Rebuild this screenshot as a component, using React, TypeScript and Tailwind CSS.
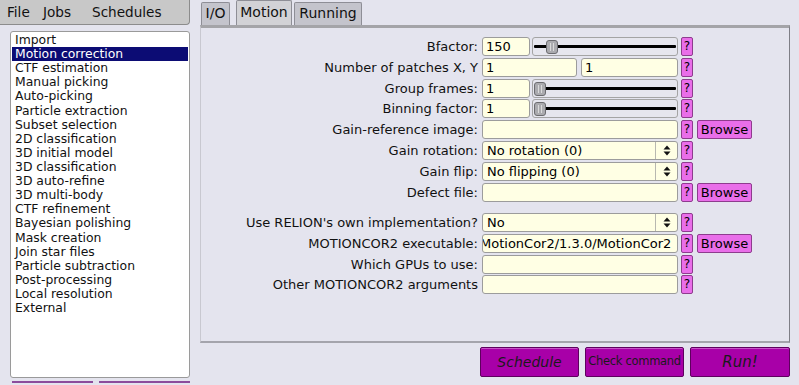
import React from "react";

const jobs = [
  "Import",
  "Motion correction",
  "CTF estimation",
  "Manual picking",
  "Auto-picking",
  "Particle extraction",
  "Subset selection",
  "2D classification",
  "3D initial model",
  "3D classification",
  "3D auto-refine",
  "3D multi-body",
  "CTF refinement",
  "Bayesian polishing",
  "Mask creation",
  "Join star files",
  "Particle subtraction",
  "Post-processing",
  "Local resolution",
  "External",
];

function Help() {
  return (
    <div className="ml-[3px] w-[12px] h-[19px] bg-[#e96ee9] border border-[#8e3c8e] rounded-[2px] text-[12px] leading-[17px] text-center text-black">
      ?
    </div>
  );
}

function Browse() {
  return (
    <div className="ml-[4px] w-[55px] h-[19px] bg-[#e96ee9] border border-[#8e3c8e] rounded-[2px] text-[13px] leading-[17px] text-center text-black">
      Browse
    </div>
  );
}

function Input({ w, value, className }: { w: string; value?: string; className?: string }) {
  return (
    <div
      className={`${w} h-[19px] bg-[#ffffe4] border border-[#9c9c9c] rounded-[3px] text-[13px] leading-[17px] px-[3px] overflow-hidden whitespace-nowrap text-black ${className ?? ""}`}
    >
      {value}
    </div>
  );
}

function Slider({ thumb }: { thumb: number }) {
  return (
    <div className="relative ml-[2px] w-[146px] h-[19px] border border-[#a4a4a4] rounded-[3px] bg-[#e6e6ee] flex items-center px-[1px]">
      <div className="w-full h-[3px] bg-black rounded-[1px]" />
      <div
        className="absolute top-[2px] w-[12px] h-[14px] bg-[#ababaf] border border-[#6c6c70] rounded-[3px] flex justify-center"
        style={{ left: thumb }}
      >
        <div className="mt-[2px] w-[4px] h-[8px] border-l border-r border-[#dadada]" />
      </div>
    </div>
  );
}

function Select({ value }: { value: string }) {
  return (
    <div className="w-[196px] h-[19px] bg-[#ffffe4] border border-[#9c9c9c] rounded-[3px] flex text-[13px] leading-[17px] text-black">
      <div className="flex-1 px-[4px] border-r border-[#b8b8b0]">{value}</div>
      <div className="w-[21px] flex items-center justify-center">
        <svg width="8" height="11" viewBox="0 0 8 11">
          <polygon points="4,0.5 7.5,4.5 0.5,4.5" fill="#111" />
          <polygon points="0.5,6.5 7.5,6.5 4,10.5" fill="#111" />
        </svg>
      </div>
    </div>
  );
}

function Row({ label, children, className }: { label: string; children: React.ReactNode; className?: string }) {
  return (
    <div className={`h-[20.8px] flex items-start ${className ?? ""}`}>
      <div className="w-[278px] text-right text-[13px] leading-[19px] text-[#111] pr-[1px] whitespace-nowrap">{label}</div>
      <div className="ml-[3px] flex items-start">{children}</div>
    </div>
  );
}

export default function App() {
  return (
    <div className="w-[799px] h-[385px] bg-[#e4e4ee] flex overflow-hidden font-['DejaVu_Sans',sans-serif] text-black">
      {/* Left column */}
      <div className="w-[200px] flex flex-col shrink-0">
        <div className="shrink-0 w-[190px] h-[25px] bg-[#c8c8c8] border-b border-r border-[#8c8c8c] rounded-br-[4px] flex items-center pl-[7px] text-[13.6px] text-[#111]">
          <span className="w-[36px]">File</span>
          <span className="w-[49px]">Jobs</span>
          <span>Schedules</span>
        </div>
        <div className="shrink-0 mt-[6px] ml-[10px] w-[180px] h-[347px] bg-white border border-[#9a9a9a] rounded-[3px] pt-[1px] px-[1px]">
          {jobs.map((j) => (
            <div
              key={j}
              className={`h-[14.12px] leading-[14.12px] text-[12.4px] pl-[3px] whitespace-nowrap ${
                j === "Motion correction" ? "bg-[#0c0c74] text-white" : "text-[#111]"
              }`}
            >
              {j}
            </div>
          ))}
        </div>
        <div className="shrink-0 mt-[3px] ml-[12px] flex gap-[6px]">
          <div className="w-[81px] h-[10px] bg-[#e4e4ee] border-t-2 border-[#8c4c9c]" />
          <div className="w-[91px] h-[10px] bg-[#e4e4ee] border-t-2 border-[#8c4c9c]" />
        </div>
      </div>

      {/* Right column */}
      <div className="flex flex-col w-[599px]">
        <div className="shrink-0 h-[25px] flex items-end pl-[1px] text-[14px] text-[#111]">
          <div className="w-[29px] h-[23px] bg-[#c4c4cc] border-t border-l border-r border-[#8e8e96] rounded-t-[2px] text-center leading-[21px]">
            I/O
          </div>
          <div className="ml-[6px] w-[56px] h-[25px] bg-[#d2d2d6] border-t border-l border-r border-[#8e8e96] rounded-t-[2px] text-center leading-[22px]">
            Motion
          </div>
          <div className="ml-[2px] w-[68px] h-[23px] bg-[#c4c4cc] border-t border-l border-r border-[#8e8e96] rounded-t-[2px] text-center leading-[21px]">
            Running
          </div>
        </div>
        <div className="shrink-0 w-[590px] h-[318px] border-t-[3px] border-t-[#a4a4a8] border-r border-r-[#7e7e86] border-b-2 border-b-[#a4a4ac] border-l border-l-[#c8c8d0] pt-[9px]">
          <Row label="Bfactor:">
            <Input w="w-[48px]" value="150" />
            <Slider thumb={13} />
            <Help />
          </Row>
          <Row label="Number of patches X, Y">
            <Input w="w-[95px]" value="1" />
            <Input w="w-[97px]" value="1" className="ml-[4px]" />
            <Help />
          </Row>
          <Row label="Group frames:">
            <Input w="w-[48px]" value="1" />
            <Slider thumb={1} />
            <Help />
          </Row>
          <Row label="Binning factor:">
            <Input w="w-[48px]" value="1" />
            <Slider thumb={1} />
            <Help />
          </Row>
          <Row label="Gain-reference image:">
            <Input w="w-[196px]" />
            <Help />
            <Browse />
          </Row>
          <Row label="Gain rotation:">
            <Select value="No rotation (0)" />
            <Help />
          </Row>
          <Row label="Gain flip:">
            <Select value="No flipping (0)" />
            <Help />
          </Row>
          <Row label="Defect file:">
            <Input w="w-[196px]" />
            <Help />
            <Browse />
          </Row>
          <Row label="Use RELION's own implementation?" className="mt-[9.6px]">
            <Select value="No" />
            <Help />
          </Row>
          <Row label="MOTIONCOR2 executable:">
            <div className="w-[196px] h-[19px] bg-[#ffffe4] border border-[#9c9c9c] rounded-[3px] text-[13px] leading-[17px] overflow-hidden whitespace-nowrap pl-0 indent-[-3px]">
              MotionCor2/1.3.0/MotionCor2
            </div>
            <Help />
            <Browse />
          </Row>
          <Row label="Which GPUs to use:">
            <Input w="w-[196px]" />
            <Help />
          </Row>
          <Row label="Other MOTIONCOR2 arguments">
            <Input w="w-[196px]" />
            <Help />
          </Row>
        </div>
        <div className="shrink-0 mt-[4px] pl-[280px] flex gap-[6px] text-[#1a1a1a]">
          <div className="w-[99px] h-[30px] bg-[#a800a8] border border-[#5e005e] rounded-[2px] shadow-[inset_0_1px_0_#c850c8] flex items-center justify-center italic text-[14px]">
            Schedule
          </div>
          <div className="w-[99px] h-[30px] bg-[#a800a8] border border-[#5e005e] rounded-[2px] shadow-[inset_0_1px_0_#c850c8] flex items-center justify-center text-[11.5px] whitespace-nowrap tracking-[-0.3px]">
            Check command
          </div>
          <div className="w-[100px] h-[30px] bg-[#a800a8] border border-[#5e005e] rounded-[2px] shadow-[inset_0_1px_0_#c850c8] flex items-center justify-center italic text-[15px]">
            Run!
          </div>
        </div>
      </div>
    </div>
  );
}
